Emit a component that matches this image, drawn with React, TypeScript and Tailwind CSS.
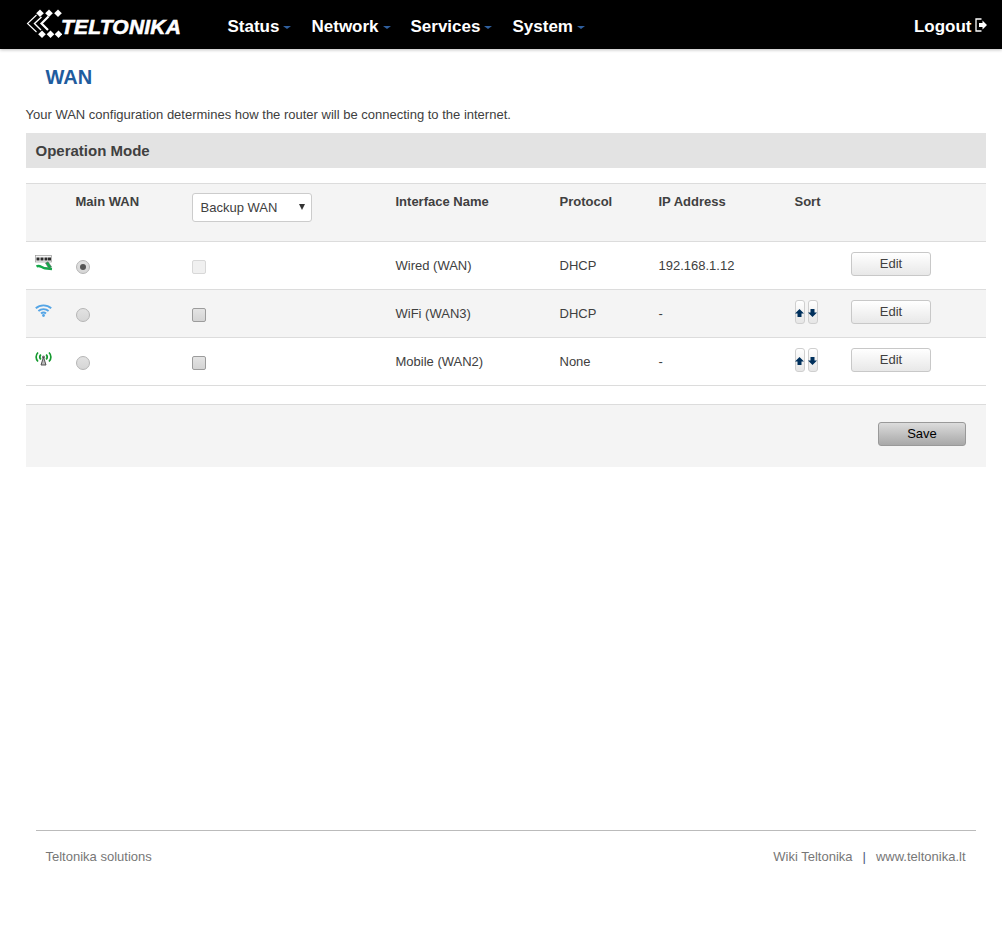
const font = "font-['Liberation_Sans',Arial,sans-serif]"

const nav = [
  { label: "Status", cls: "w-[84px]" },
  { label: "Network", cls: "w-[99px]" },
  { label: "Services", cls: "w-[102px]" },
  { label: "System", cls: "w-[80px]" },
]

const cols = "grid grid-cols-[39.500px_116.500px_203.500px_164px_99px_136px_56.500px_145px]"

function Logo() {
  return (
    <div className="flex items-center w-[201.500px] ml-[26px] mt-[-1px]">
      <svg width="36" height="30" viewBox="0 0 36 30" className="shrink-0">
        <g fill="#fff">
          <path d="M14 0.500l3.800 3.800-3.800 3.800-3.800-3.800z" />
          <path d="M23 0.500l3.800 3.800-3.800 3.800-3.800-3.800z" />
          <path d="M32 0.500l3.800 3.800-3.800 3.800-3.800-3.800z" />
          <path d="M16 21.500l3.800 3.800-3.800 3.800-3.800-3.800z" />
          <path d="M24.500 21.500l3.800 3.800-3.800 3.800-3.800-3.800z" />
          <path d="M32.500 21.500l3.800 3.800-3.800 3.800-3.800-3.800z" />
        </g>
        <g fill="none" stroke="#fff">
          <path d="M10.500 6L1.500 14.500l9 8.500" strokeWidth="1.100" />
          <path d="M15.500 8l-7 6.500 6.500 6.500" strokeWidth="1.400" />
          <path d="M22.500 7.500l-7 7 6.500 6.500" strokeWidth="2.200" />
        </g>
      </svg>
      <span className="text-white font-bold italic text-[21px] leading-none tracking-[0.200px] ml-[-1px] mt-[4px] [-webkit-text-stroke:0.6px_#fff]">TELTONIKA</span>
    </div>
  )
}

function LogoutIcon() {
  return (
    <svg width="12" height="14" viewBox="0 0 12 14" className="ml-[3px] -mt-[4px]">
      <path d="M6.500 1H1v12h5.500" fill="none" stroke="#fff" strokeWidth="1.300" />
      <path d="M4 5h3.500V2.500L12 7l-4.500 4.500V9H4z" fill="#fff" />
    </svg>
  )
}

function WiredIcon() {
  return (
    <svg width="18" height="16" viewBox="0 0 18 16" className="ml-[1px]">
      <rect x="0.500" y="0.500" width="16" height="6.500" fill="#f5f5f5" stroke="#9a9a9a" strokeWidth="0.700" />
      <g fill="#2b2b2b">
        <rect x="1.500" y="2.500" width="3" height="3" />
        <rect x="5.500" y="2.500" width="3" height="3" />
        <rect x="9.500" y="2.500" width="3" height="3" />
        <rect x="13" y="2.500" width="3" height="3" />
      </g>
      <path d="M1.500 11.500c3-1.800 5 1 8.500 1.800l7 .7" fill="none" stroke="#14a84a" strokeWidth="2.400" />
      <path d="M10.500 8l2.500-1.200 3.500 5-2.500 2z" fill="#14a84a" stroke="#666" strokeWidth="0.600" />
    </svg>
  )
}

function WifiIcon() {
  return (
    <svg width="17" height="13" viewBox="0 0 17 13">
      <g fill="none" stroke="#54a5e6" strokeWidth="1.900">
        <path d="M0.800 4.200c4.300-3.800 11.100-3.800 15.400 0" />
        <path d="M3.400 7c2.900-2.500 7.300-2.500 10.200 0" />
        <path d="M6 9.500c1.400-1.200 3.600-1.200 5 0" />
      </g>
      <circle cx="8.500" cy="11.500" r="1.400" fill="#54a5e6" />
    </svg>
  )
}

function MobileIcon() {
  return (
    <svg width="17" height="15" viewBox="0 0 17 15">
      <g fill="none" stroke="#159a2f" strokeWidth="1.700">
        <path d="M3 1.500c-2.500 2.500-2.500 6.500 0 9" />
        <path d="M5.800 3.500c-1.300 1.500-1.300 3.500 0 5" />
        <path d="M14 1.500c2.500 2.500 2.500 6.500 0 9" />
        <path d="M11.200 3.500c1.300 1.500 1.300 3.500 0 5" />
      </g>
      <circle cx="8.500" cy="6" r="1.600" fill="#777" />
      <path d="M8.500 6L6 14h5z" fill="#bbb" stroke="#444" strokeWidth="0.900" />
    </svg>
  )
}

function Radio({ checked }: { checked?: boolean }) {
  return (
    <span className="flex items-center justify-center w-[14px] h-[14px] ml-[0.500px] rounded-full border border-[#b5b5b5] bg-gradient-to-b from-[#e2e2e2] to-[#d6d6d6]">
      {checked && <span className="w-[6px] h-[6px] rounded-full bg-[#555]" />}
    </span>
  )
}

function Check({ disabled }: { disabled?: boolean }) {
  return (
    <span className={`block w-[14px] h-[14px] rounded-[2px] border ${disabled ? "border-[#d8d8d8] bg-[#f0f0f0]" : "border-[#9c9c9c] bg-gradient-to-b from-[#e4e4e4] to-[#d4d4d4]"}`} />
  )
}

function SortBtn({ down }: { down?: boolean }) {
  return (
    <button className="flex items-center justify-center w-[10px] h-[24px] rounded-[3px] border border-[#cfcfcf] bg-gradient-to-b from-white to-[#e6e6e6]">
      <svg width="9" height="8" viewBox="0 0 9 8" className="shrink-0 mt-[2px]">
        <path d={down ? "M2.500 0h4v3.500H9L4.500 8 0 3.500h2.500z" : "M2.500 8h4V4.500H9L4.500 0 0 4.500h2.500z"} fill="#00305c" />
      </svg>
    </button>
  )
}

function EditBtn() {
  return (
    <button className="w-[80px] h-[24px] rounded-[3px] border border-[#c8c8c8] bg-gradient-to-b from-white to-[#e8e8e8] text-[13px] text-[#404040] leading-none pb-[1px]">
      Edit
    </button>
  )
}

const rows = [
  { icon: <WiredIcon />, name: "Wired (WAN)", proto: "DHCP", ip: "192.168.1.12", checked: true, first: true },
  { icon: <WifiIcon />, name: "WiFi (WAN3)", proto: "DHCP", ip: "-", shaded: true },
  { icon: <MobileIcon />, name: "Mobile (WAN2)", proto: "None", ip: "-" },
]

export default function App() {
  return (
    <div className={`${font} min-h-[933px] bg-white text-[13px] text-[#404040]`}>
      <header className="flex items-center h-[49px] bg-black shadow-[0_1px_3px_rgba(0,0,0,0.25)]">
        <Logo />
        <nav className="flex mt-[4px]">
          {nav.map((n) => (
            <a key={n.label} className={`flex items-center ${n.cls} text-white font-bold text-[17px]`}>
              {n.label}
              <span className="ml-[4px] mt-[1px] w-0 h-0 border-x-[4px] border-x-transparent border-t-[3px] border-t-[#2f5f9e]" />
            </a>
          ))}
        </nav>
        <a className="flex items-center ml-auto mr-[15.500px] mt-[4px] text-white font-bold text-[17px]">
          Logout
          <LogoutIcon />
        </a>
      </header>

      <main className="px-[26px] pr-[16px]">
        <h1 className="pl-[19.500px] pt-[17px] text-[20px] leading-[23px] font-bold text-[#1f5c9e]">WAN</h1>
        <p className="mt-[18px] -ml-[0.500px] leading-[15px]">Your WAN configuration determines how the router will be connecting to the internet.</p>
        <h2 className="mt-[11px] h-[35px] pl-[9.500px] pt-[1px] flex items-center bg-[#e3e3e3] text-[15px] font-bold">Operation Mode</h2>

        <section className="mt-[15px]">
          <div className={`${cols} h-[59px] bg-[#f4f4f4] border-y border-[#dcdcdc] font-bold`}>
            <div />
            <div className="pl-[10px] pt-[8px]">Main WAN</div>
            <div className="pl-[10px] pt-[9px]">
              <div className="relative flex items-center w-[120px] h-[29px] pl-[7.500px] bg-white border border-[#cccccc] rounded-[3px] font-normal">
                Backup WAN
                <span className="absolute right-[6px] top-[10px] w-0 h-0 border-x-[3.500px] border-x-transparent border-t-[6px] border-t-[#333]" />
              </div>
            </div>
            <div className="pl-[10px] pt-[8px]">Interface Name</div>
            <div className="pl-[10px] pt-[8px]">Protocol</div>
            <div className="pl-[10px] pt-[8px]">IP Address</div>
            <div className="pl-[10px] pt-[8px]">Sort</div>
            <div />
          </div>
          {rows.map((r) => (
            <div key={r.name} className={`${cols} h-[48px] items-center border-b border-[#dcdcdc] ${r.shaded ? "bg-[#f4f4f4]" : "bg-white"}`}>
              <div className="flex justify-center -ml-[4px] -mt-[6px]">{r.icon}</div>
              <div className="pl-[10px] mt-[2px]"><Radio checked={r.checked} /></div>
              <div className="pl-[10px] mt-[2px]"><Check disabled={r.first} /></div>
              <div className="pl-[10px]">{r.name}</div>
              <div className="pl-[10px]">{r.proto}</div>
              <div className="pl-[10px]">{r.ip}</div>
              <div className="pl-[10px] flex gap-[3px] -mt-[3px]">
                {!r.first && (
                  <>
                    <SortBtn />
                    <SortBtn down />
                  </>
                )}
              </div>
              <div className="pl-[10px] flex -mt-[3px]"><EditBtn /></div>
            </div>
          ))}
        </section>

        <div className="mt-[18px] h-[63px] flex justify-end items-start pt-[17px] pr-[20px] bg-[#f4f4f4] border-t border-[#dcdcdc]">
          <button className="w-[88px] h-[24px] pb-[2px] rounded-[3px] border border-[#999] bg-gradient-to-b from-[#dcdcdc] to-[#a8a8a8] text-[13px] text-black leading-none">
            Save
          </button>
        </div>
      </main>

      <footer className="mt-[363px] mx-[36px] mr-[26px] border-t border-[#bbbbbb] flex justify-between pl-[9.500px] pr-[10.500px] pt-[18px] text-[#777] leading-[15px]">
        <span>Teltonika solutions</span>
        <span>
          Wiki Teltonika<span className="mx-[10px] text-[#4a5a7a]">|</span>www.teltonika.lt
        </span>
      </footer>
    </div>
  )
}
